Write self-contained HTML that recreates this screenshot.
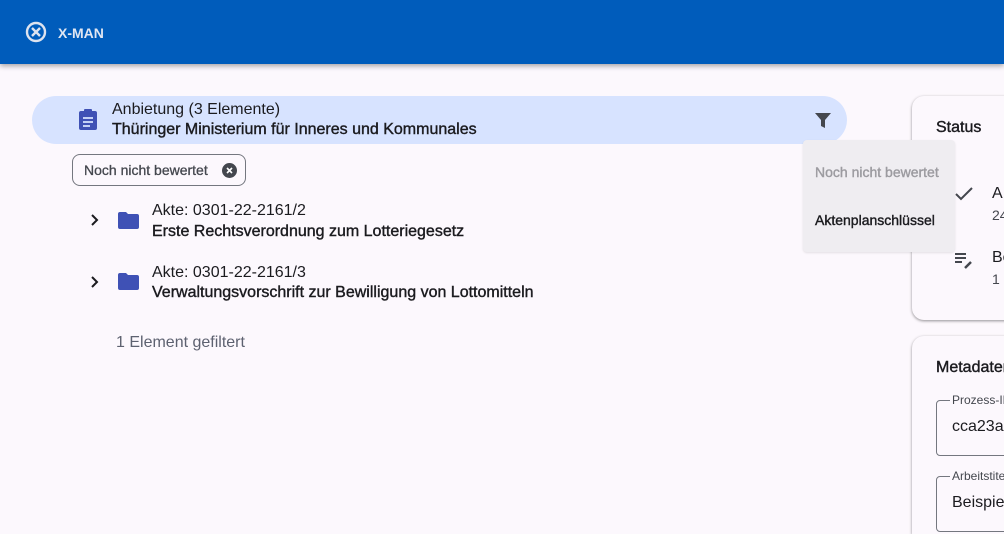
<!DOCTYPE html>
<html style="overflow:hidden;width:1004px;height:534px"><head><meta charset="utf-8"><style>
*{box-sizing:border-box;margin:0;padding:0}
body{width:1004px;height:534px;overflow:hidden;background:#fcf8fd;font-family:"Liberation Sans",sans-serif;color:#1b1b1f;position:relative}
.hdr{position:absolute;left:0;top:0;width:1004px;height:64px;background:#005cbb;box-shadow:0 2px 5px rgba(0,0,0,.35)}
.abs{position:absolute;white-space:nowrap}
.m{-webkit-text-stroke:0.4px currentColor}
.pill{position:absolute;left:32px;top:96px;width:815px;height:48px;background:#d7e3ff;border-radius:24px}
.chip{position:absolute;left:72px;top:154px;width:174px;height:32px;border:1px solid #74777f;border-radius:8px;background:#fcf8fd}
.card{position:absolute;left:912px;background:#fcf8fd;border-radius:12px;box-shadow:0 1px 3px rgba(0,0,0,.3),0 1px 2px rgba(0,0,0,.15);width:110px}
.menu{position:absolute;left:803px;top:140px;width:152px;height:112px;background:#efedf1;border-radius:4px;box-shadow:0 1px 2px rgba(0,0,0,.1)}
.fld{position:absolute;left:936px;width:90px;border:1px solid #74777f;border-radius:4px;height:56px}
.lbl{position:absolute;font-size:12px;color:#44474e;background:#fcf8fd;padding:0 2px;white-space:nowrap}
</style></head><body>
<div class="hdr">
<svg class="abs" style="left:25px;top:21px" width="22" height="22" viewBox="0 0 22 22"><circle cx="11" cy="11" r="9" fill="none" stroke="#dde3ef" stroke-width="2.4"/><path d="M7 7L15 15M15 7L7 15" stroke="#dde3ef" stroke-width="2.4"/></svg>
<div class="abs" style="left:58px;top:25px;font-size:14px;font-weight:bold;color:#e0e6f2">X-MAN</div>
</div>
<div class="pill"></div>
<svg class="abs" style="left:78px;top:108px" width="20" height="22" viewBox="0 0 20 22"><rect x="1" y="3" width="18" height="19" rx="2" fill="#3f51b5"/><rect x="6" y="1" width="8" height="5" rx="1" fill="#3f51b5"/><path d="M5 10h10M5 14h10M5 18h7" stroke="#d7e3ff" stroke-width="1.8"/></svg>
<div class="abs" style="left:112px;top:101px;font-size:16px">Anbietung (3 Elemente)</div>
<div class="abs m" style="left:112px;top:121px;font-size:16px">Thüringer Ministerium für Inneres und Kommunales</div>
<svg class="abs" style="left:814px;top:112px" width="18" height="17" viewBox="0 0 18 17"><path d="M1 1h16L11 8v8l-4-2V8z" fill="#44474e"/></svg>
<div class="chip"></div>
<div class="abs m" style="left:84px;top:162px;font-size:14px;color:#44474e;-webkit-text-stroke:0.3px #44474e">Noch nicht bewertet</div>
<svg class="abs" style="left:222px;top:163px" width="15" height="15" viewBox="0 0 15 15"><circle cx="7.5" cy="7.5" r="7.5" fill="#44474e"/><path d="M5 5l5 5M10 5l-5 5" stroke="#fff" stroke-width="1.6"/></svg>
<svg class="abs" style="left:90px;top:213px" width="10" height="14" viewBox="0 0 10 14"><path d="M2 2l5 5-5 5" fill="none" stroke="#1b1b1f" stroke-width="2"/></svg>
<svg class="abs" style="left:118px;top:212px" width="21" height="17" viewBox="0 0 21 17"><path d="M0 2a2 2 0 0 1 2-2h6l2 2h9a2 2 0 0 1 2 2v11a2 2 0 0 1-2 2H2a2 2 0 0 1-2-2z" fill="#3f51b5"/></svg>
<div class="abs" style="left:152px;top:202px;font-size:16px">Akte: 0301-22-2161/2</div>
<div class="abs m" style="left:152px;top:223px;font-size:16px">Erste Rechtsverordnung zum Lotteriegesetz</div>
<svg class="abs" style="left:90px;top:275px" width="10" height="14" viewBox="0 0 10 14"><path d="M2 2l5 5-5 5" fill="none" stroke="#1b1b1f" stroke-width="2"/></svg>
<svg class="abs" style="left:118px;top:273px" width="21" height="17" viewBox="0 0 21 17"><path d="M0 2a2 2 0 0 1 2-2h6l2 2h9a2 2 0 0 1 2 2v11a2 2 0 0 1-2 2H2a2 2 0 0 1-2-2z" fill="#3f51b5"/></svg>
<div class="abs" style="left:152px;top:264px;font-size:16px">Akte: 0301-22-2161/3</div>
<div class="abs m" style="left:152px;top:284px;font-size:16px">Verwaltungsvorschrift zur Bewilligung von Lottomitteln</div>
<div class="abs" style="left:116px;top:334px;font-size:16px;color:#5d6170">1 Element gefiltert</div>

<div class="card" style="top:96px;height:224px"></div>
<div class="abs m" style="left:936px;top:119px;font-size:16px">Status</div>
<svg class="abs" style="left:954px;top:186px" width="20" height="16" viewBox="0 0 20 16"><path d="M2 8l5 5L18 2" fill="none" stroke="#44474e" stroke-width="2"/></svg>
<div class="abs" style="left:992px;top:185px;font-size:16px">A</div>
<div class="abs" style="left:992px;top:207px;font-size:14px;color:#44474e">24</div>
<svg class="abs" style="left:954px;top:252px" width="20" height="18" viewBox="0 0 20 18"><path d="M1 2h11M1 6h11M1 10h7" stroke="#44474e" stroke-width="2"/><path d="M11 16l6-6" stroke="#44474e" stroke-width="2.5"/></svg>
<div class="abs" style="left:992px;top:249px;font-size:16px">Be</div>
<div class="abs" style="left:992px;top:271px;font-size:14px;color:#44474e">1</div>

<div class="card" style="top:336px;height:198px;border-bottom-left-radius:0;border-bottom-right-radius:0"></div>
<div class="abs m" style="left:936px;top:359px;font-size:16px">Metadaten</div>
<div class="fld" style="top:400px"></div>
<div class="lbl" style="left:950px;top:393px">Prozess-ID</div>
<div class="abs" style="left:952px;top:418px;font-size:16px">cca23a</div>
<div class="fld" style="top:476px"></div>
<div class="lbl" style="left:950px;top:469px">Arbeitstitel</div>
<div class="abs" style="left:952px;top:494px;font-size:16px">Beispiel</div>

<div class="menu"></div>
<div class="abs m" style="left:815px;top:164px;font-size:14px;color:#9c9ba0">Noch nicht bewertet</div>
<div class="abs m" style="left:815px;top:212px;font-size:14px">Aktenplanschlüssel</div>
</body></html>
